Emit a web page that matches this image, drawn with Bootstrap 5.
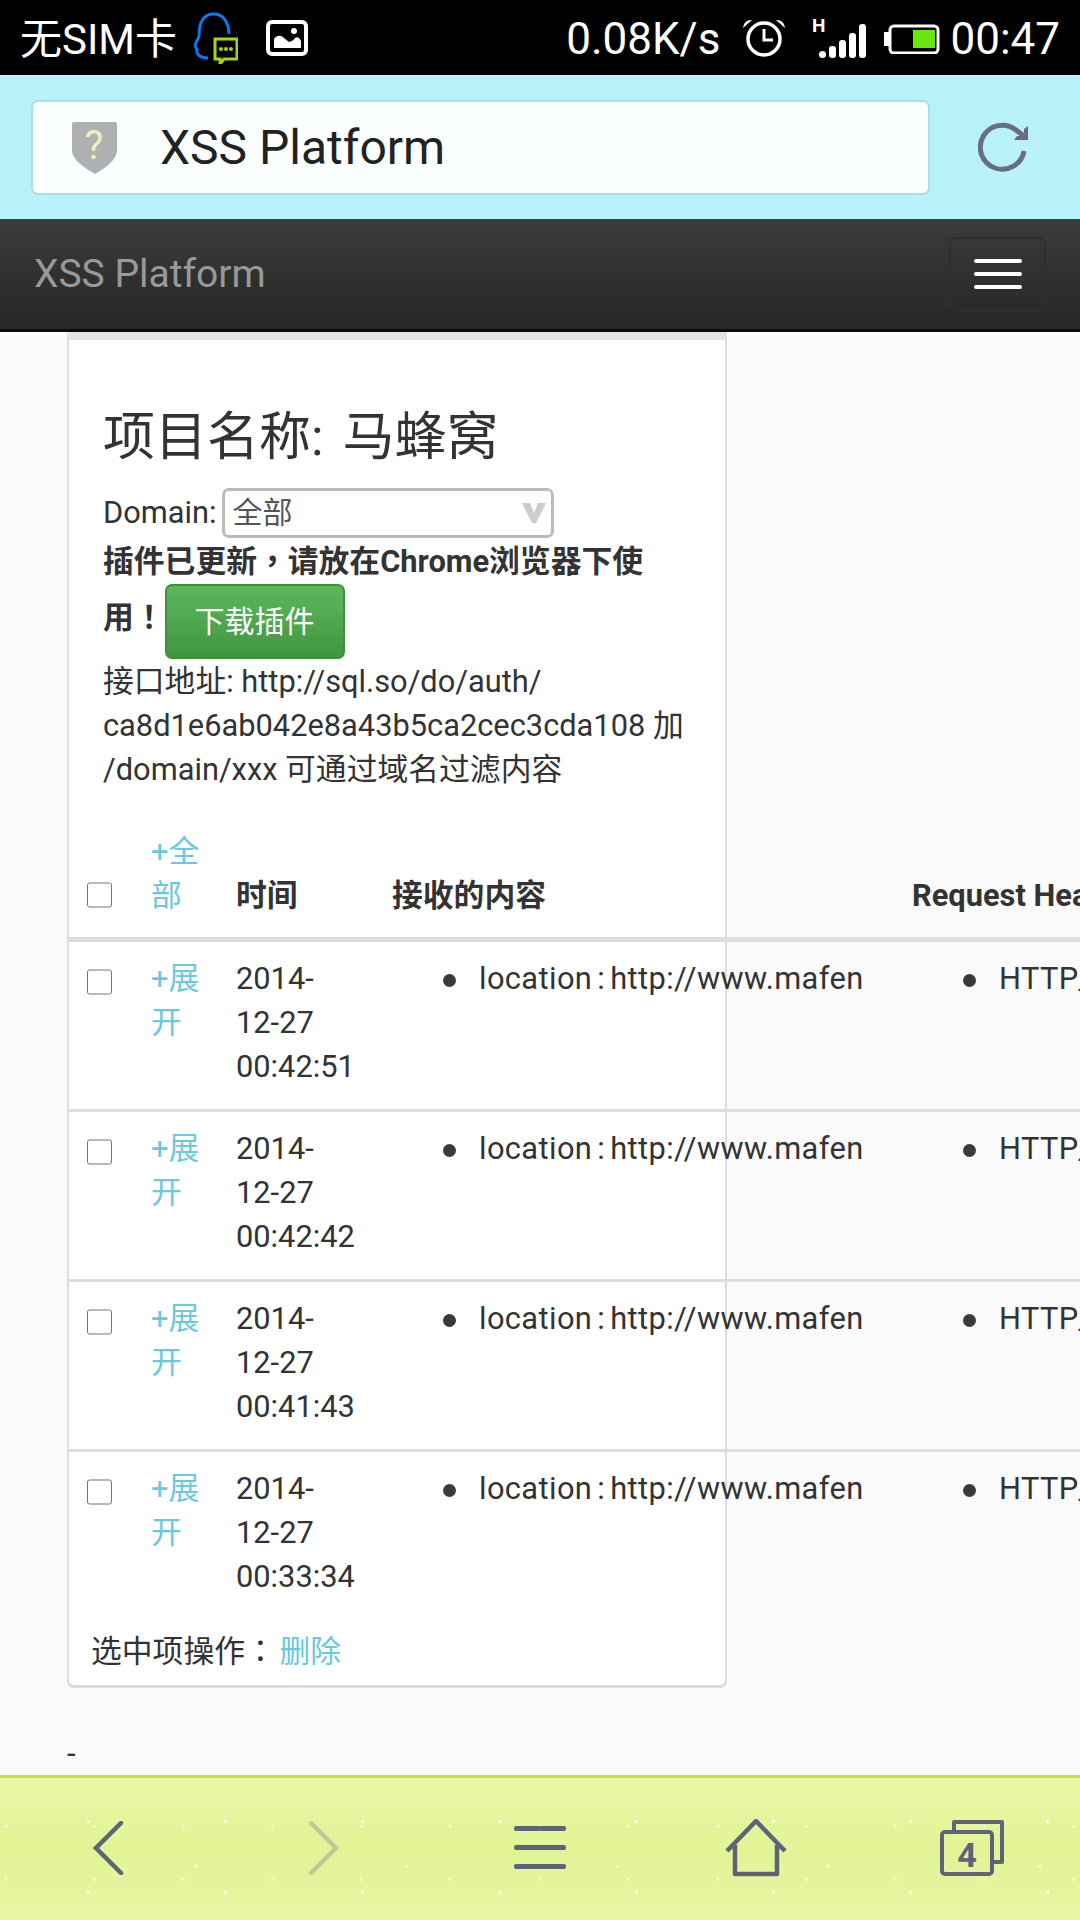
<!DOCTYPE html>
<html lang="zh">
<head>
<meta charset="utf-8">
<title>XSS Platform</title>
<link rel="stylesheet" href="https://cdn.jsdelivr.net/npm/bootstrap@5.3.0/dist/css/bootstrap.min.css">
<style>
html,body{height:1920px;overflow:hidden}
body{background:#fafafa;color:#333;font-family:Roboto,"Noto Sans CJK SC",sans-serif;font-size:30.8px;line-height:44px}
.punct-tc{font-family:"Noto Sans CJK TC",sans-serif}
.phone-status{height:75px;background:#000;color:#fff;font-size:42px;line-height:75px;font-weight:400;padding:4px 20px 0}
.phone-status svg{display:block;flex:none;margin-top:-4px}
.phone-status .sl-batt{margin-top:-1px}
.sl-num{font-size:44px}
.sl-qq{margin-left:17px}.sl-img{margin-left:28px}
.sl-alarm{margin-left:22px}.sl-signal{margin-left:26px}.sl-batt{margin-left:18px}.sl-time{margin-left:10px}
.addr-bar{height:144px;background:#b9f1fb;padding:25px 50px 24px 31px}
.addr-box{width:899px;height:95px;background:#fbfffe;border:2px solid #a9dde7;border-radius:7px;font-size:48px;color:#222;padding-left:38px;flex:none}
.addr-box span{margin-left:42px}
.reload-ico{margin-left:48px;flex:none}
.dark-nav{height:113px;background:linear-gradient(#3c3c3c,#262626);border-bottom:3px solid #0d0d0d;padding:0 34px 0 34px}
.dark-nav .navbar-brand{color:#999;font-size:39px;padding:0;margin:0;line-height:1}
.burger{width:97px;height:74px;border:2px solid #2f2f2f;border-radius:7px;background:transparent;gap:9px;padding:0}
.burger i{display:block;width:48px;height:4px;background:#fff;border-radius:2px}
.page-main{height:1443px;padding:0 0 0 67px;overflow:hidden}
.proj-panel{width:660px;border:solid #dcdcdc;border-width:8px 2px 3px;border-top-color:#e5e5e5;border-radius:0 0 7px 7px;background:#fff;--bs-card-bg:#fff}
.proj-head{padding:69px 30px 0 34px}
.proj-title{font-size:52px;line-height:57px;font-weight:400;margin:0 0 22px;color:#333;word-spacing:6px}
.dom-row{height:50px;gap:5px}
.dom-sel{width:332px;height:50px;padding:0 0 0 8px;font-size:30px;line-height:44px;color:#555;border:3px solid #bbb;border-radius:7px;background-color:#fff;background-image:url("data:image/svg+xml,%3Csvg xmlns='http://www.w3.org/2000/svg' viewBox='0 0 24 20'%3E%3Cpath d='M0 0h8l4 10 4-10h8L14 20h-4z' fill='%23ccc'/%3E%3C/svg%3E");background-position:right 5px center;background-size:24px 20px;box-shadow:none}
.note-txt{margin:0;line-height:41px}
.dl-btn{width:180px;height:75px;padding:0;font-size:30px;line-height:71px;border:2px solid #3e8f3e;border-radius:7px;background:linear-gradient(#5cb85c,#419641);color:#fff;vertical-align:middle;margin:2px 0 -2px 0}
.api-txt{margin:2.5px 0 0}
.table.log-table{width:1423px;max-width:none;table-layout:fixed;border-collapse:separate;border-spacing:0;margin:21px 0 0;color:#333;--bs-table-bg:transparent}
.table.log-table>:not(caption)>*>*{border:0;padding:15px 0 20px 20px;background:transparent;box-shadow:none;color:#333}
.log-table a{color:#6cc8de;text-decoration:none}
.table.log-table>thead>tr>th{vertical-align:bottom;font-weight:700;padding:17.5px 0 19px 20px;border-bottom:5px solid #ddd}
.table.log-table>tbody>tr+tr>td{border-top:3px solid #ddd}
.log-table ul{margin:0;padding-left:87px;white-space:nowrap;list-style:none}
.log-table li{position:relative;letter-spacing:.4px;word-spacing:-3px}
.log-table li::before{content:"";position:absolute;left:-36px;top:17px;width:13px;height:13px;border-radius:50%;background:#3a3a3a}
.tick{display:block;width:25px;height:26px;margin:12px 0 8px -2px;border:2px solid #bbb;border-radius:4px;background:#fff}
.log-table thead .tick{margin:0 0 10px -2px}
.foot-ops{padding:8px 0 11px 22px;margin:0;word-spacing:-4px}
.foot-ops a{color:#6cc8de;text-decoration:none}
.dash-line{margin-top:44px}
.bottom-bar{height:145px;padding-bottom:2px;border-top:3px solid #cfe03c;background-color:#e6f59e;background-image:radial-gradient(circle,rgba(255,255,255,.85) 0 1.2px,transparent 2.2px),radial-gradient(circle,rgba(255,255,255,.7) 0 1.2px,transparent 2.2px),radial-gradient(circle,rgba(255,255,255,.6) 0 1px,transparent 2px),linear-gradient(#e9f7a6,#e3f396 50%,#e8f6a2);background-size:137px 71px,211px 97px,89px 53px,100% 100%;background-position:20px 8px,90px 40px,50px 22px,0 0}
.bottom-bar>div{width:216px}
</style>
</head>
<body>
<div class="d-flex align-items-center phone-status">
  <span>无SIM卡</span>
  <svg class="sl-qq" width="44" height="52" viewBox="0 0 44 52"><path d="M14 46C6 46 2 42 3 38L1 33c1-3 3-5 4-9 0-5 0-22 15-22 12 0 15 13 15 20" fill="none" stroke="#0a78f0" stroke-width="3"/><path d="M21 27h22v20H30l-4 5v-5h-5z" fill="none" stroke="#a7d40f" stroke-width="3"/><g fill="#a7d40f"><circle cx="27" cy="37" r="2"/><circle cx="32" cy="37" r="2"/><circle cx="37" cy="37" r="2"/></g></svg>
  <svg class="sl-img" width="42" height="36" viewBox="0 0 42 36"><rect x="2" y="2" width="38" height="32" rx="4" fill="none" stroke="#fff" stroke-width="4"/><path d="M8 28v-9c3-4 7-4 10-1l5 4c3-1 5-2 6-4 3-2 5 1 6 3v7z" fill="#fff"/><circle cx="28" cy="11" r="3" fill="#fff"/></svg>
  <span class="ms-auto sl-num">0.08K/s</span>
  <svg class="sl-alarm" width="44" height="38" viewBox="0 0 44 38"><circle cx="22" cy="20" r="16" fill="none" stroke="#fff" stroke-width="3.5"/><path d="M22 10v11h9" fill="none" stroke="#fff" stroke-width="3"/><path d="M1 9C2 3 5 1 10 1zM43 9c-1-6-4-8-9-8z" fill="#fff"/></svg>
  <svg class="sl-signal" width="54" height="40" viewBox="0 0 54 40"><text x="0" y="14" font-size="19" font-weight="700" fill="#fff" font-family="Roboto,sans-serif">H</text><g fill="#fff"><rect x="7" y="33" width="7" height="7" rx="3.5"/><rect x="17" y="28" width="7" height="12" rx="3"/><rect x="27" y="22" width="7" height="18" rx="3"/><rect x="37" y="15" width="7" height="25" rx="3"/><rect x="47" y="6" width="7" height="34" rx="3"/></g></svg>
  <svg class="sl-batt" width="56" height="30" viewBox="0 0 56 30"><path d="M4 9H1v12h3z" fill="#fff" stroke="#fff" stroke-width="2"/><rect x="6" y="2" width="48" height="27" rx="4" fill="none" stroke="#fff" stroke-width="3"/><rect x="29" y="6" width="22" height="18" fill="#66e810"/></svg>
  <span class="sl-time sl-num">00:47</span>
</div>
<div class="d-flex align-items-center addr-bar">
  <div class="d-flex align-items-center addr-box">
    <svg width="47" height="54" viewBox="0 0 47 54"><path d="M3 1h41q2 0 2 2v26c0 10-12 18-22 24C14 47 1 39 1 29V3q0-2 2-2z" fill="#aeb0b4"/><text x="23" y="38" text-anchor="middle" font-size="40" fill="#e9f2b8" font-family="Roboto,sans-serif">?</text></svg>
    <span>XSS Platform</span>
  </div>
  <svg class="reload-ico" width="54" height="54" viewBox="0 0 54 54"><path d="M46 30A22 22 0 1 1 38 9l8 6" fill="none" stroke="#686c85" stroke-width="5"/><path d="M50 5v14H36l3-4 7 0 0-7z" fill="#686c85"/></svg>
</div>
<nav class="navbar d-flex justify-content-between align-items-center dark-nav">
  <a class="navbar-brand" href="#">XSS Platform</a>
  <button class="burger d-flex flex-column align-items-center justify-content-center" type="button" aria-label="menu"><i></i><i></i><i></i></button>
</nav>
<main class="page-main">
  <div class="card proj-panel">
    <div class="proj-head">
      <h3 class="proj-title">项目名称: 马蜂窝</h3>
      <div class="d-flex align-items-center dom-row">
        <span>Domain:</span>
        <select class="form-select dom-sel"><option>全部</option></select>
      </div>
      <p class="note-txt"><strong>插件已更新<span class="punct-tc" lang="zh-Hant">，</span>请放在Chrome浏览器下使用<span class="punct-tc" lang="zh-Hant">！</span></strong><a class="btn dl-btn" href="#">下载插件</a></p>
      <p class="api-txt">接口地址: http://sql.so/do/auth/ ca8d1e6ab042e8a43b5ca2cec3cda108 加 /domain/xxx 可通过域名过滤内容</p>
    </div>
    <table class="table log-table">
      <colgroup><col style="width:62px"><col style="width:85px"><col style="width:156px"><col style="width:520px"><col style="width:600px"></colgroup>
      <thead><tr><th><input type="checkbox" class="tick"></th><th><a href="#" class="fw-normal">+全部</a></th><th>时间</th><th>接收的内容</th><th class="text-nowrap">Request Headers</th></tr></thead>
      <tbody>
        <tr><td><input type="checkbox" class="tick"></td><td><a href="#">+展开</a></td><td class="text-nowrap">2014-<br>12-27<br>00:42:51</td><td><ul><li>location : http://www.mafen</li></ul></td><td><ul><li>HTTP_REFERER</li></ul></td></tr>
        <tr><td><input type="checkbox" class="tick"></td><td><a href="#">+展开</a></td><td class="text-nowrap">2014-<br>12-27<br>00:42:42</td><td><ul><li>location : http://www.mafen</li></ul></td><td><ul><li>HTTP_REFERER</li></ul></td></tr>
        <tr><td><input type="checkbox" class="tick"></td><td><a href="#">+展开</a></td><td class="text-nowrap">2014-<br>12-27<br>00:41:43</td><td><ul><li>location : http://www.mafen</li></ul></td><td><ul><li>HTTP_REFERER</li></ul></td></tr>
        <tr><td><input type="checkbox" class="tick"></td><td><a href="#">+展开</a></td><td class="text-nowrap">2014-<br>12-27<br>00:33:34</td><td><ul><li>location : http://www.mafen</li></ul></td><td><ul><li>HTTP_REFERER</li></ul></td></tr>
      </tbody>
    </table>
    <p class="foot-ops">选中项操作<span class="punct-tc" lang="zh-Hant">：</span> <a href="#">删除</a></p>
  </div>
  <div class="dash-line">-</div>
</main>
<footer class="d-flex bottom-bar">
  <div class="d-flex align-items-center justify-content-center"><svg width="32" height="54" viewBox="0 0 32 54"><path d="M29 2 4 27l25 25" fill="none" stroke="#5f6378" stroke-width="4.5" stroke-linecap="round"/></svg></div>
  <div class="d-flex align-items-center justify-content-center"><svg width="32" height="54" viewBox="0 0 32 54"><path d="M3 2l25 25L3 52" fill="none" stroke="#bfc79a" stroke-width="4.5" stroke-linecap="round"/></svg></div>
  <div class="d-flex align-items-center justify-content-center"><svg width="52" height="44" viewBox="0 0 52 44"><g fill="#5f6378"><rect y="0" width="52" height="5" rx="2"/><rect y="19" width="52" height="5" rx="2"/><rect y="38" width="52" height="5" rx="2"/></g></svg></div>
  <div class="d-flex align-items-center justify-content-center"><svg width="62" height="58" viewBox="0 0 62 58"><path d="M2 32 31 2l29 30M10 26v29h42V26" fill="none" stroke="#5f6378" stroke-width="4.5" stroke-linejoin="round"/></svg></div>
  <div class="d-flex align-items-center justify-content-center"><svg width="64" height="56" viewBox="0 0 64 56"><path d="M14 10V2h48v40h-8" fill="none" stroke="#5f6378" stroke-width="4" stroke-linejoin="round"/><rect x="2" y="12" width="50" height="42" rx="3" fill="none" stroke="#5f6378" stroke-width="4"/><text x="27" y="47" text-anchor="middle" font-size="34" font-weight="700" fill="#5f6378" font-family="Roboto,sans-serif">4</text></svg></div>
</footer>
<script src="https://cdn.jsdelivr.net/npm/bootstrap@5.3.0/dist/js/bootstrap.bundle.min.js"></script>
</body>
</html>
